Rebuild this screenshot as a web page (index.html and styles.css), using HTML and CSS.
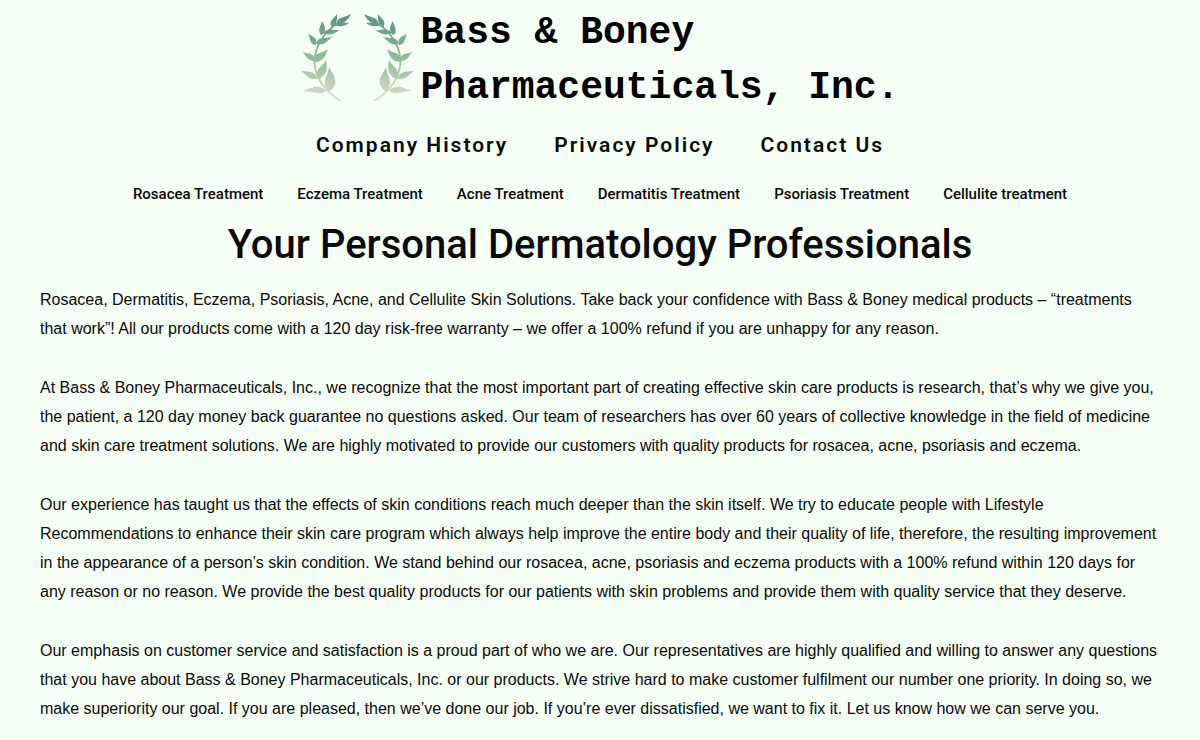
FILE: index.html
```html
<!DOCTYPE html>
<html lang="en">
<head>
<meta charset="utf-8">
<meta name="viewport" content="width=device-width, initial-scale=1">
<title>Bass &amp; Boney Pharmaceuticals, Inc.</title>
<link rel="stylesheet" href="styles.css">
</head>
<body>
<header class="site-header">
  <a class="brand" href="#">
    <svg class="brand-mark" viewBox="0 0 114 90" width="114" height="90" aria-hidden="true">
      <defs>
        <linearGradient id="leaf" gradientUnits="userSpaceOnUse" x1="0" y1="0" x2="0" y2="90">
          <stop offset="0" stop-color="#5d9380"/>
          <stop offset=".25" stop-color="#76a68d"/>
          <stop offset=".55" stop-color="#9dc09d"/>
          <stop offset=".8" stop-color="#c3d3bb"/>
          <stop offset="1" stop-color="#dbe3d3"/>
        </linearGradient>
        <g id="branch">
          <path d="M40 7C28 14 14 28 13.500 47C14 64 24 77 39 86.500" fill="none" stroke="url(#leaf)" stroke-width="1.700" stroke-linecap="round"/>
          <path d="M36 8C37 3 43 4 50 0C47 6 44 10 36 9Z"/>
          <path d="M33 11C37 6 42 9 48 9C43 13 38 13 33 11Z"/>
          <path d="M30 12C28 6 33 5 36 0C36 6 37 9 30 13Z"/>
          <path d="M20 21C16 15 20 12 21 7C24 12 26 17 21 21Z"/>
          <path d="M22 19C27 13 32 17 39 16C33 20 28 22 22 19Z"/>
          <path d="M14 31C8 29 10 25 7 20C13 23 17 24 15 31Z"/>
          <path d="M15 30C17 22 23 25 31 23C25 28 23 32 15 30Z"/>
          <path d="M14 47C5 47 6 41 1 38C8 40 14 39 14 47Z"/>
          <path d="M14 47C12 38 21 40 27 35C24 41 24 47 14 48Z"/>
          <path d="M16 65C6 66 6 60 0 57C9 58 14 57 17 65Z"/>
          <path d="M17 64C13 54 22 53 25 46C26 54 28 59 18 65Z"/>
          <path d="M25 77C17 82 10 77 2 77C10 74 17 69 26 77Z"/>
          <path d="M27 76C20 68 27 62 28 53C31 60 40 68 29 77Z"/>
        </g>
      </defs>
      <g fill="url(#leaf)">
        <use href="#branch"/>
        <use href="#branch" transform="translate(113 0) scale(-1 1)"/>
      </g>
    </svg>
    <span class="brand-name">Bass &amp; Boney<br>Pharmaceuticals, Inc.</span>
  </a>
  <nav class="main-nav" aria-label="Company">
    <a href="#">Company History</a>
    <a href="#">Privacy Policy</a>
    <a href="#">Contact Us</a>
  </nav>
  <nav class="topic-nav" aria-label="Treatments">
    <a href="#">Rosacea Treatment</a>
    <a href="#">Eczema Treatment</a>
    <a href="#">Acne Treatment</a>
    <a href="#">Dermatitis Treatment</a>
    <a href="#">Psoriasis Treatment</a>
    <a href="#">Cellulite treatment</a>
  </nav>
</header>
<main class="content">
  <h1 class="title">Your Personal Dermatology Professionals</h1>
  <p>Rosacea, Dermatitis, Eczema, Psoriasis, Acne, and Cellulite Skin Solutions. Take back your confidence with Bass &amp; Boney medical products – “treatments that work”! All our products come with a 120 day risk-free warranty – we offer a 100% refund if you are unhappy for any reason.</p>
  <p>At Bass &amp; Boney Pharmaceuticals, Inc., we recognize that the most important part of creating effective skin care products is research, that’s why we give you, the patient, a 120 day money back guarantee no questions asked. Our team of researchers has over 60 years of collective knowledge in the field of medicine and skin care treatment solutions. We are highly motivated to provide our customers with quality products for rosacea, acne, psoriasis and eczema.</p>
  <p>Our experience has taught us that the effects of skin conditions reach much deeper than the skin itself. We try to educate people with Lifestyle Recommendations to enhance their skin care program which always help improve the entire body and their quality of life, therefore, the resulting improvement in the appearance of a person’s skin condition. We stand behind our rosacea, acne, psoriasis and eczema products with a 100% refund within 120 days for any reason or no reason. We provide the best quality products for our patients with skin problems and provide them with quality service that they deserve.</p>
  <p>Our emphasis on customer service and satisfaction is a proud part of who we are. Our representatives are highly qualified and willing to answer any questions that you have about Bass &amp; Boney Pharmaceuticals, Inc. or our products. We strive hard to make customer fulfilment our number one priority. In doing so, we make superiority our goal. If you are pleased, then we’ve done our job. If you’re ever dissatisfied, we want to fix it. Let us know how we can serve you.</p>
</main>
</body>
</html>
```

FILE: styles.css
```css
body {
  margin: 0;
  background: #f6fff6;
  color: #0a0a0a;
  font: 16px/29px "Liberation Sans", Arial, sans-serif;
}

a {
  color: inherit;
  text-decoration: none;
}

.site-header {
  display: flex;
  flex-direction: column;
  align-items: center;
  font-family: Roboto, sans-serif;
  font-weight: 500;
}

.brand {
  display: flex;
  align-items: center;
  gap: 6px;
  padding-top: 3px;
}

.brand-name {
  padding-top: 2px;
  font: bold 38px/55px "Liberation Mono", "Courier New", monospace;
  color: #000;
}

.main-nav {
  display: flex;
  flex-wrap: wrap;
  justify-content: center;
  gap: 8px 46px;
  padding-top: 14px;
  font-size: 21px;
  font-weight: 600;
  line-height: 32px;
  letter-spacing: 2px;
}

.topic-nav {
  display: flex;
  flex-wrap: wrap;
  justify-content: center;
  gap: 4px 34px;
  padding-top: 21px;
  font-size: 15px;
  line-height: 24px;
}

.content {
  padding: 0 40px;
}

.title {
  margin: 15px 0 16px;
  font: 500 40px/48px Roboto, sans-serif;
  text-align: center;
}

.content p {
  margin: 0 0 30px;
}
```
